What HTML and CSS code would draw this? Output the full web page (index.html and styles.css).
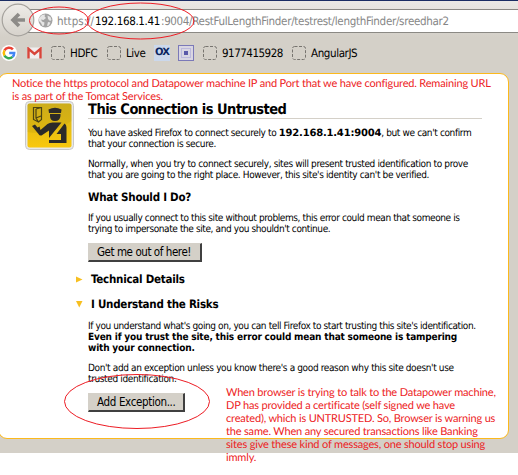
FILE: index.html
```
<!DOCTYPE html>
<html lang="en">
<head>
<meta charset="utf-8">
<title>Untrusted Connection</title>
<link rel="stylesheet" href="styles.css">
</head>
<body>
<div class="window">
  <header class="toolbar">
    <div class="nav">
      <div class="back">
        <svg width="34" height="34" viewBox="0 0 34 34">
          <defs><linearGradient id="btn" x1="0" y1="0" x2="0" y2="1"><stop offset="0" stop-color="#eeece8"/><stop offset="1" stop-color="#d6d2cb"/></linearGradient></defs>
          <circle cx="17" cy="17" r="15.8" fill="url(#btn)" stroke="#a5a29d" stroke-width="1.2"/>
          <path d="M24 17H12.500M18 11l-6 6 6 6" fill="none" stroke="#8d8b88" stroke-width="3.6"/>
        </svg>
      </div>
      <div class="urlbar">
        <svg class="globe" width="15" height="15" viewBox="0 0 15 15">
          <circle cx="7.5" cy="7.5" r="7" fill="#a3a3a3"/>
          <path d="M1 5l3-3 3-.6-.4 2L8 5 5.500 7 3 6.500 4 8.500l2.500 1-.5 3-1.500.5L3 10 1 8zM9.500 2.500l3 1.500 1 3-1.500 1-2-2zM10 9l2.500.5-1.500 3-2 .5z" fill="#e6e6e6"/>
        </svg>
        <span class="scheme">https://</span><span class="host">192.168.1.41</span><span class="port">:9004</span><span class="path">/RestFulLengthFinder/testrest/lengthFinder/sreedhar2</span>
      </div>
    </div>
    <div class="bookmarks">
      <svg class="google" width="16" height="16" viewBox="0 0 16 16">
        <circle cx="8" cy="8" r="8" fill="#fff"/>
        <g fill="none" stroke-width="2.500">
          <path d="M11.900 4.400A5.200 5.200 0 0 0 3.500 5.400" stroke="#ea4335"/>
          <path d="M3.500 5.400A5.200 5.200 0 0 0 3.500 10.600" stroke="#fbbc05"/>
          <path d="M3.500 10.600A5.200 5.200 0 0 0 11.500 11.900" stroke="#34a853"/>
          <path d="M11.500 11.900A5.200 5.200 0 0 0 13.200 8H8.200" stroke="#4285f4"/>
        </g>
      </svg>
      <svg class="mail" width="15" height="12" viewBox="0 0 15 12">
        <path d="M.5.500h14v11H.5z" fill="#f1eeee"/>
        <path d="M1.500 11.500V1.800l6 5.200 6-5.200v9.700" fill="none" stroke="#d8453a" stroke-width="2.400"/>
      </svg>
      <span class="item"><svg class="blank" width="14" height="14"><rect x=".5" y=".5" width="13" height="13" rx="2"/></svg>HDFC</span>
      <span class="item live"><svg class="blank" width="14" height="14"><rect x=".5" y=".5" width="13" height="13" rx="2"/></svg>Live</span>
      <span class="ox">OX</span>
      <span class="frame"><span class="frame-inner"><span class="frame-dot"></span></span></span>
      <span class="item phone"><svg class="blank" width="14" height="14"><rect x=".5" y=".5" width="13" height="13" rx="2"/></svg>9177415928</span>
      <span class="item"><svg class="blank" width="14" height="14"><rect x=".5" y=".5" width="13" height="13" rx="2"/></svg>AngularJS</span>
    </div>
  </header>

  <main class="card">
    <svg class="officer" width="49" height="49" viewBox="0 0 49 49">
      <defs><linearGradient id="gold" x1="0" y1="0" x2="0" y2="1"><stop offset="0" stop-color="#d5b51d"/><stop offset=".5" stop-color="#e6bd12"/><stop offset="1" stop-color="#f9c80e"/></linearGradient></defs>
      <rect x=".5" y=".5" width="48" height="48" rx="4" fill="#e9e9e9" stroke="#c9c9c9"/>
      <rect x="2.500" y="2.500" width="44" height="44" rx="2" fill="url(#gold)"/>
      <path d="M2.500 31Q25 35 46.500 20V4.500a2 2 0 0 0-2-2h-40a2 2 0 0 0-2 2z" fill="#a98b12" opacity=".18"/>
      <g fill="#2b2a29">
        <path d="M23.500 8.500Q30 5 36.500 8.500L36 12H24z"/>
        <path d="M25 13h10.500v2Q35 20 30 20T25 15z"/>
        <path d="M7 25l3-1.500 2.500 3 2-1 1 3.500 7-6q2-1.500 5-1.500h9L24 37v-7.500l-7.500 5q-2 .5-3-1.500z"/>
        <path d="M39.500 22.500q2 1 2 4V42H24v-3h12V33H31.500z"/>
      </g>
      <path d="M8.500 6.500h8v12l-3 2.500-5-2.500zM11 8l5.500-1.500M11 8v9l2.500 4M11 17l5-2" fill="none" stroke="#4c4413" stroke-width="1.200"/>
    </svg>
    <section class="content">
      <h1>This Connection is Untrusted</h1>
      <p>You have asked Firefox to connect securely to <b class="addr">192.168.1.41:9004</b>, but we can't confirm<br>that your connection is secure.</p>
      <p>Normally, when you try to connect securely, sites will present trusted identification to prove<br>that you are going to the right place. However, this site's identity can't be verified.</p>
      <h2>What Should I Do?</h2>
      <p class="advice">If you usually connect to this site without problems, this error could mean that someone is<br>trying to impersonate the site, and you shouldn't continue.</p>
      <button class="leave">Get me out of here!</button>
      <h2 class="toggle"><svg width="7" height="7" viewBox="0 0 7 7"><path d="M0 .5l6.500 3-6.500 3z"/></svg>Technical Details</h2>
      <h2 class="toggle open"><svg width="7" height="7" viewBox="0 0 7 7"><path d="M0 0h6.500L3.250 6.500z"/></svg>I Understand the Risks</h2>
      <p class="risks">If you understand what's going on, you can tell Firefox to start trusting this site's identification.<br><b>Even if you trust the site, this error could mean that someone is tampering<br>with your connection.</b></p>
      <p class="caution">Don't add an exception unless you know there's a good reason why this site doesn't use<br>trusted identification.</p>
      <button class="add">Add Exception...</button>
    </section>
  </main>

  <p class="note note-top">Notice the https protocol and Datapower machine IP and Port that we have configured. Remaining URL<br>is as part of the Tomcat Services.</p>
  <p class="note note-bottom">When browser is trying to talk to the Datapower machine,<br>DP has provided a certificate (self signed we have<br>created), which is UNTRUSTED. So, Browser is warning us<br>the same. When any secured transactions like Banking<br>sites give these kind of messages, one should stop using<br>immly.</p>
  <svg class="marks" width="518" height="453">
    <ellipse cx="59" cy="20.500" rx="29.500" ry="13.500"/>
    <ellipse cx="140.500" cy="21" rx="53.500" ry="18"/>
    <ellipse cx="137" cy="401.500" rx="72.500" ry="27"/>
  </svg>
</div>
</body>
</html>
```
FILE: styles.css
```
* { box-sizing: border-box; }
body {
  margin: 0;
  height: 475px;
  background: #fff;
  color: #000;
  font-family: "DejaVu Sans Condensed", "DejaVu Sans", sans-serif;
  font-stretch: condensed;
  text-rendering: geometricPrecision;
  white-space: nowrap;
}
h1, h2, p { margin: 0; }
.window {
  position: relative;
  height: 453px;
  background: #d4d0c8;
}
.toolbar {
  height: 73px;
  border-top: 1px solid #1b2d63;
  background: linear-gradient(#ebe9e5, #d4d0c8 36px);
}
.nav {
  display: flex;
  align-items: center;
  height: 38px;
  padding-left: 1px;
}
.back { height: 34px; z-index: 1; }
.urlbar {
  flex: 1;
  display: flex;
  align-items: center;
  height: 24px;
  margin: 1px 0 0 -8px;
  padding-left: 11px;
  border: 1px solid #8b8984;
  border-width: 1px 0;
  background: #fff;
  color: #868686;
  font-size: 11.5px;
}
.globe { margin-right: 4px; }
.scheme { width: 38px; }
.host { width: 66px; color: #000; letter-spacing: -.34px; }
.port { width: 28px; letter-spacing: -.35px; }
.path { letter-spacing: -.3px; }

.bookmarks {
  display: flex;
  align-items: center;
  height: 28px;
  padding-left: 1px;
  font-size: 11.5px;
  letter-spacing: -.4px;
}
.mail { margin-left: 10px; }
.item {
  flex: none;
  display: flex;
  align-items: center;
  gap: 5px;
  width: 46px;
  margin-left: 9px;
}
.blank { flex: none; fill: none; stroke: #77746f; stroke-dasharray: 3 1.5; }
.live { margin-left: 10px; width: 47px; }
.phone { width: 80px; letter-spacing: -.5px; }
.ox {
  width: 16px;
  height: 16px;
  background: #cbd8ec;
  color: #0b2560;
  font: bold 10px/15px "DejaVu Sans", sans-serif;
  letter-spacing: -1px;
  text-align: center;
}
.frame {
  display: grid;
  place-items: center;
  width: 16px;
  height: 16px;
  margin-left: 8px;
  border: 1px solid #7b79b8;
  background: #d9d6e2;
}
.frame-inner {
  display: grid;
  place-items: center;
  width: 10px;
  height: 10px;
  border: 1px solid #bcb9dd;
}
.frame-dot { width: 4px; height: 4px; background: #5a58a8; }

.card {
  display: flex;
  align-items: flex-start;
  width: 511px;
  height: 366px;
  margin-left: -2px;
  padding: 27px 0 0 26px;
  border: 1px solid #fcb91c;
  border-radius: 9px;
  background: #fff;
}
.officer { flex: none; }
.content {
  width: 394px;
  margin-left: 14px;
  font-size: 10px;
  line-height: 11px;
  letter-spacing: -.372px;
}
h1 {
  height: 18px;
  margin-bottom: 9px;
  border-bottom: 1px solid #d4d0c8;
  font-size: 14.5px;
  line-height: 19px;
  letter-spacing: -.52px;
}
.content p { margin-bottom: 9px; }
.content b { letter-spacing: -.18px; }
.content .addr { font-family: "DejaVu Sans", sans-serif; font-stretch: normal; letter-spacing: -.2px; }
h2 {
  margin: 9px 0;
  font-size: 11.5px;
  line-height: 14px;
  letter-spacing: -.25px;
}
.content .advice, .content .caution { margin-bottom: 8px; }
.advice, .risks { letter-spacing: -.4px; }
.toggle {
  display: flex;
  align-items: center;
  gap: 8px;
  margin: 10px 0 11px -12px;
}
.toggle svg { fill: #f7bf20; }
.open { margin-bottom: 10px; }
button {
  display: block;
  height: 19px;
  padding: 0 0 0 8px;
  border: 1px solid;
  border-color: #d4d0c8 #404040 #404040 #d4d0c8;
  border-width: 1px 2px 2px 1px;
  background: #d4d0c8;
  color: #000;
  font: 11.5px/15px "DejaVu Sans Condensed", "DejaVu Sans", sans-serif;
  text-align: left;
}
.leave { width: 114px; letter-spacing: -.44px; }
.add { width: 97px; letter-spacing: -.35px; }

.note {
  position: absolute;
  color: #ed1c24;
  font: 11px/13px Lato, sans-serif;
  letter-spacing: -.175px;
}
.note-top { left: 12px; top: 77px; }
.note-bottom { left: 226px; top: 386px; }
.marks {
  position: absolute;
  inset: 0;
  z-index: 2;
  fill: none;
  stroke: #ed1c24;
}
```
